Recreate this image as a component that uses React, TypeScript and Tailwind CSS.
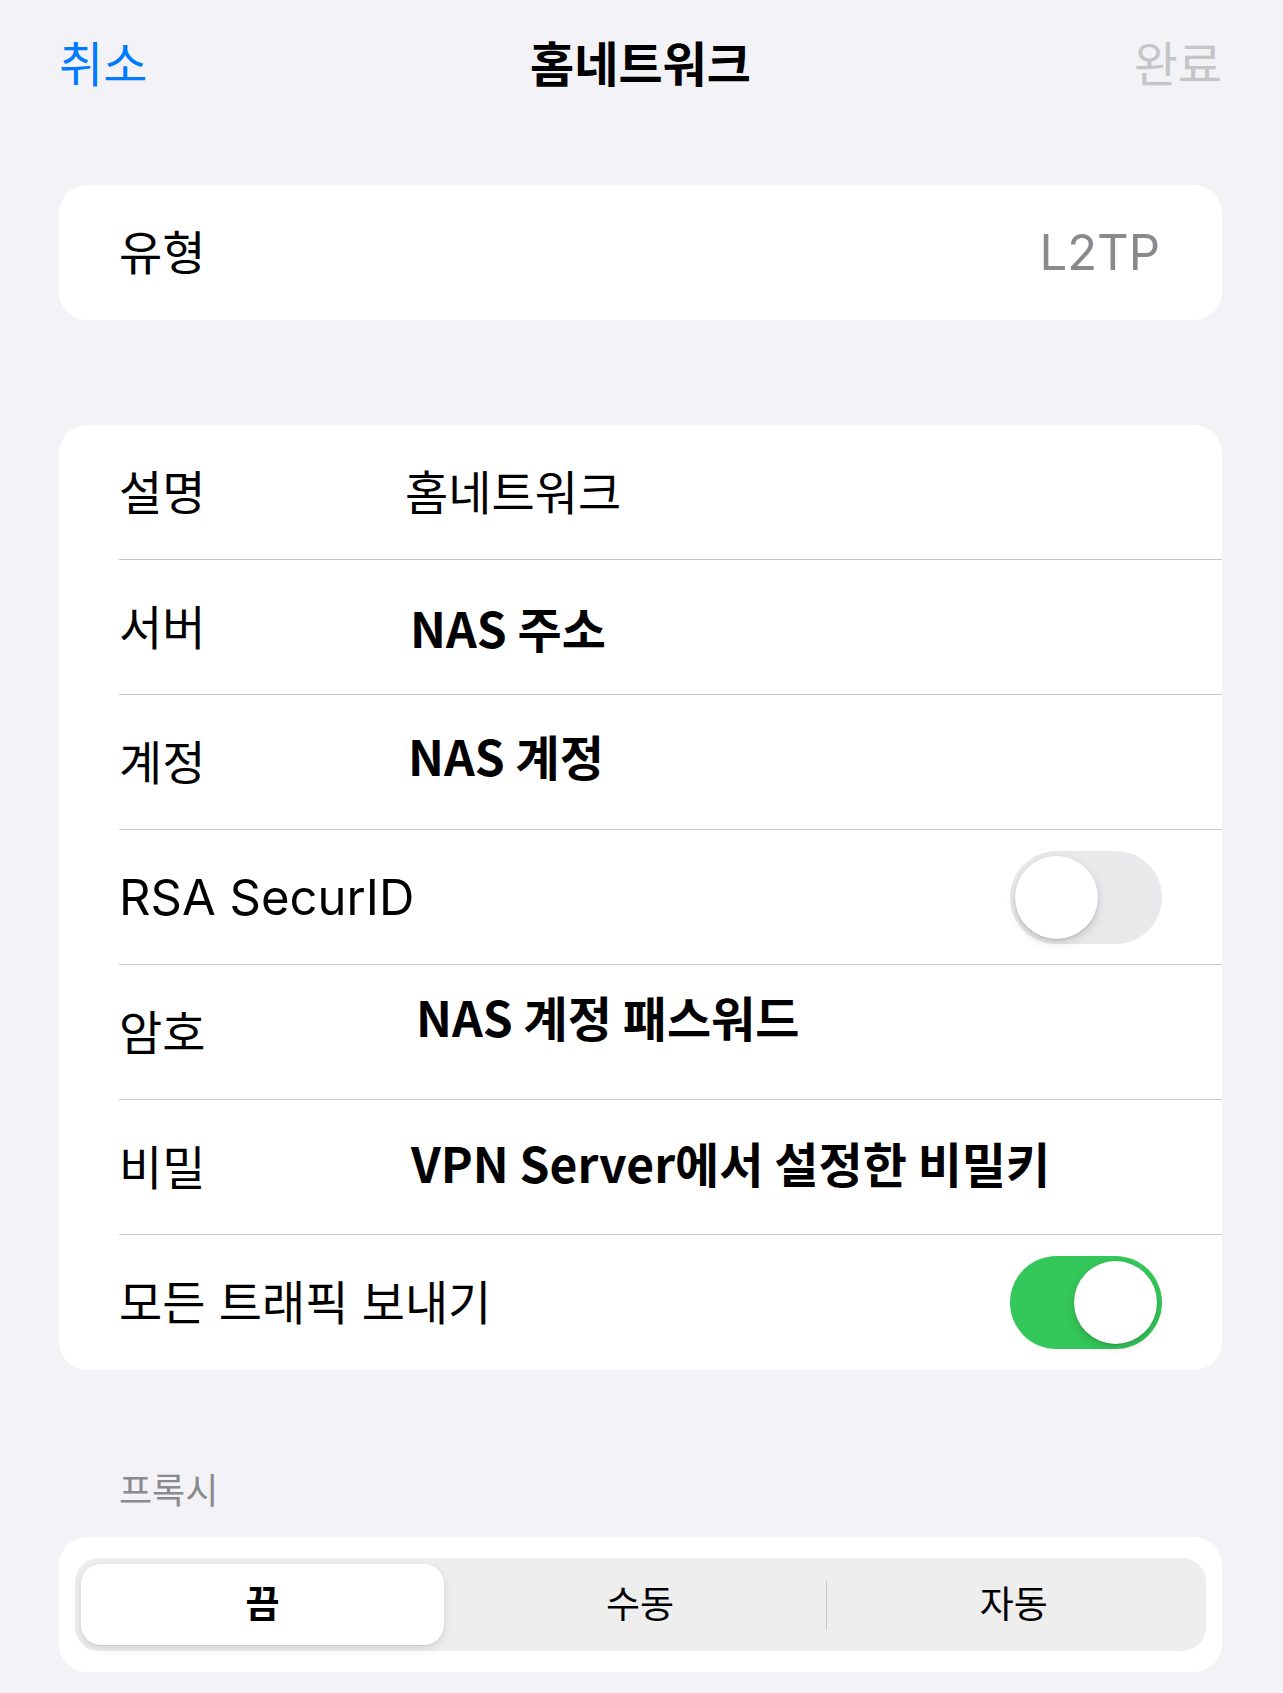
const sans = "font-['Inter','Noto_Sans_CJK_KR',sans-serif]";
const cjk = "font-['Noto_Sans_CJK_KR',sans-serif]";

function Toggle({ on }: { on: boolean }) {
  return (
    <div
      className={`flex h-[93px] w-[152px] shrink-0 items-center rounded-full p-[5px] ${
        on ? "justify-end bg-[#34c759]" : "justify-start bg-[#e9e9eb]"
      }`}
    >
      <div className="h-[83px] w-[83px] rounded-full bg-white shadow-[0_4px_10px_rgba(0,0,0,0.15),0_1px_2px_rgba(0,0,0,0.12)]" />
    </div>
  );
}

interface RowProps {
  label: string;
  children?: React.ReactNode;
  last?: boolean;
}

function Row({ label, children, last }: RowProps) {
  return (
    <div
      className={`ml-[60px] flex h-[135px] items-center pr-[60px] ${
        last ? "" : "border-b border-[#c8c8cc]"
      }`}
    >
      <div className="w-[286px] shrink-0 text-[47px] leading-none text-black">{label}</div>
      {children}
    </div>
  );
}

export default function App() {
  return (
    <div className={`min-h-[1693px] bg-[#f2f2f7] pl-[59px] pr-[61px] ${sans}`}>
      {/* 상단 내비게이션 */}
      <div className="flex h-[130px] items-center justify-between">
        <span className="text-[48px] text-[#007aff]">취소</span>
        <span className="text-[48px] font-semibold text-black">홈네트워크</span>
        <span className="text-[48px] text-[#c5c5c8]">완료</span>
      </div>

      <div className="mt-[55px] flex h-[135px] items-center justify-between rounded-[28px] bg-white pl-[60px] pr-[62px]">
        <span className="text-[47px] leading-none text-black">유형</span>
        <span className="text-[49px] leading-none text-[#8a8a8e]">L2TP</span>
      </div>

      <div className="mt-[105px] rounded-[28px] bg-white">
        <Row label="설명">
          <span className="text-[47px] leading-none text-black">홈네트워크</span>
        </Row>
        <Row label="서버">
          <span className={`ml-[5px] text-[48px] font-bold leading-none text-black ${cjk}`}>NAS 주소</span>
        </Row>
        <Row label="계정">
          <span className={`ml-[3px] pb-[14px] text-[48px] font-bold leading-none text-black ${cjk}`}>
            NAS 계정
          </span>
        </Row>
        <div className="ml-[60px] flex h-[135px] items-center justify-between border-b border-[#c8c8cc] pr-[60px]">
          <span className="text-[49px] leading-none text-black">RSA SecurID</span>
          <Toggle on={false} />
        </div>
        <Row label="암호">
          <span className={`ml-[11px] pb-[32px] text-[48px] font-bold leading-none text-black ${cjk}`}>
            NAS 계정 패스워드
          </span>
        </Row>
        <Row label="비밀">
          <span className={`ml-[6px] pb-[10px] text-[48px] font-bold leading-none text-black ${cjk}`}>
            VPN Server에서 설정한 비밀키
          </span>
        </Row>
        <div className="ml-[60px] flex h-[135px] items-center justify-between pr-[60px]">
          <span className="text-[47px] leading-none text-black">모든 트래픽 보내기</span>
          <Toggle on={true} />
        </div>
      </div>

      <div className="flex h-[167px] items-end pb-[24px] pl-[60px]">
        <span className="text-[36px] leading-[44px] text-[#8a8a8e]">프록시</span>
      </div>

      <div className="rounded-[28px] bg-white px-[16px] py-[21px]">
        <div className="flex h-[93px] items-center rounded-[24px] bg-[#eeeeef] p-[6px]">
          <div className="flex h-full flex-1 items-center">
            <div className="flex h-full w-[363px] items-center justify-center rounded-[20px] bg-white shadow-[0_3px_8px_rgba(0,0,0,0.12),0_1px_1px_rgba(0,0,0,0.06)]">
              <span className="text-[37px] font-semibold text-black">끔</span>
            </div>
          </div>
          <div className="flex h-full flex-1 items-center justify-center">
            <span className="text-[37px] text-black">수동</span>
          </div>
          <div className="h-[50px] w-px bg-[#c8c8cc]" />
          <div className="flex h-full flex-1 items-center justify-center">
            <span className="text-[37px] text-black">자동</span>
          </div>
        </div>
      </div>
    </div>
  );
}
